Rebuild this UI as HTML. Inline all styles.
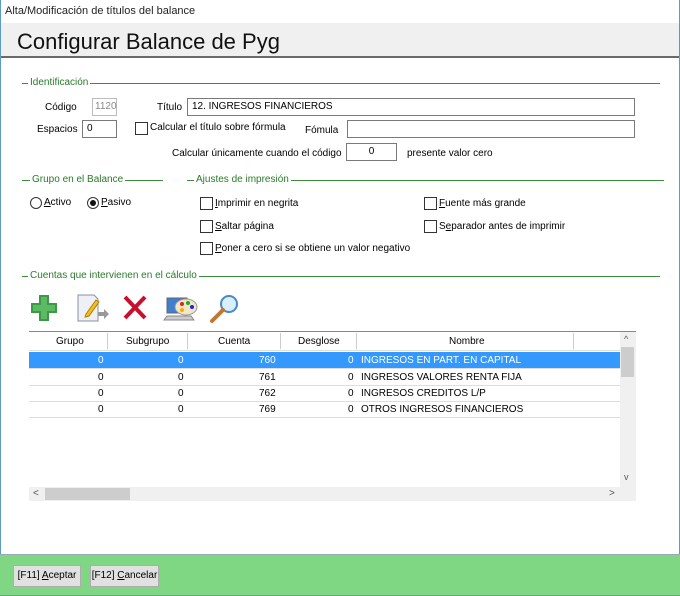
<!DOCTYPE html>
<html><head><meta charset="utf-8"><style>
*{margin:0;padding:0;box-sizing:border-box}
body{width:680px;height:596px;position:relative;background:#fff;font-family:"Liberation Sans",Arial,sans-serif;font-size:10px;color:#000;overflow:hidden}
.a{position:absolute;white-space:nowrap}
.in{position:absolute;border:1px solid #7a7a7a;background:#fff;padding:1px 4px;font-size:10px;line-height:14px}
.cb{position:absolute;width:13px;height:13px;border:1px solid #333;background:#fff}
.g{color:#2a7a2a}
.ln{position:absolute;height:1px;background:#3c8c3c}
.gl{position:absolute;height:1px;background:#ddd}
</style></head><body>
<div class="a" style="left:0;top:0;width:1px;height:596px;background:#5d9cc0"></div>
<div class="a" style="right:0;top:0;width:1px;height:596px;background:#5d9cc0"></div>
<div class="a" style="left:5px;top:5px;font-size:11px;color:#222">Alta/Modificación de títulos del balance</div>
<div class="a" style="left:1px;top:23px;width:678px;height:35px;background:#f0f0f0;border-bottom:2px solid #6a6a6a"></div>
<div class="a" style="left:17px;top:29px;font-size:22px;color:#111">Configurar Balance de Pyg</div>

<div class="ln" style="left:22px;top:83px;width:638px"></div>
<div class="a g" style="left:28px;top:77px;background:#fff;padding:0 2px">Identificación</div>
<div class="a" style="left:45px;top:102px">Código</div>
<div class="in" style="left:92px;top:98px;width:25px;height:18px;color:#888;border-color:#bbb;padding:1px 2px;text-align:center">1120</div>
<div class="a" style="left:157px;top:102px">Título</div>
<div class="in" style="left:187px;top:98px;width:448px;height:18px">12. INGRESOS FINANCIEROS</div>
<div class="a" style="left:37px;top:124px">Espacios</div>
<div class="in" style="left:82px;top:120px;width:35px;height:18px">0</div>
<div class="cb" style="left:135px;top:122px"></div>
<div class="a" style="left:150px;top:122px">Calcular el título sobre fórmula</div>
<div class="a" style="left:305px;top:125px">Fómula</div>
<div class="in" style="left:347px;top:120px;width:288px;height:18px"></div>
<div class="a" style="left:172px;top:148px">Calcular únicamente cuando el código</div>
<div class="in" style="left:346px;top:143px;width:51px;height:18px;text-align:center">0</div>
<div class="a" style="left:407px;top:148px">presente valor cero</div>

<div class="ln" style="left:22px;top:180px;width:141px"></div>
<div class="a g" style="left:30px;top:174px;background:#fff;padding:0 2px">Grupo en el Balance</div>
<div class="ln" style="left:187px;top:180px;width:477px"></div>
<div class="a g" style="left:194px;top:174px;background:#fff;padding:0 2px">Ajustes de impresión</div>
<div class="a" style="left:30px;top:197px;width:12px;height:12px;border:1px solid #333;border-radius:50%"></div>
<div class="a" style="left:44px;top:197px"><u>A</u>ctivo</div>
<div class="a" style="left:87px;top:197px;width:12px;height:12px;border:1px solid #333;border-radius:50%"><div style="margin:2px;width:6px;height:6px;border-radius:50%;background:#111"></div></div>
<div class="a" style="left:101px;top:197px"><u>P</u>asivo</div>
<div class="cb" style="left:200px;top:197px"></div><div class="a" style="left:215px;top:198px"><u>I</u>mprimir en negrita</div>
<div class="cb" style="left:200px;top:220px"></div><div class="a" style="left:215px;top:221px"><u>S</u>altar página</div>
<div class="cb" style="left:200px;top:242px"></div><div class="a" style="left:215px;top:243px"><u>P</u>oner a cero si se obtiene un valor negativo</div>
<div class="cb" style="left:424px;top:197px"></div><div class="a" style="left:439px;top:198px"><u>F</u>uente más grande</div>
<div class="cb" style="left:424px;top:220px"></div><div class="a" style="left:439px;top:221px">S<u>e</u>parador antes de imprimir</div>

<div class="ln" style="left:22px;top:276px;width:638px"></div>
<div class="a g" style="left:28px;top:270px;background:#fff;padding:0 2px">Cuentas que intervienen en el cálculo</div>

<svg class="a" style="left:30px;top:292px" width="215" height="32" viewBox="0 0 215 32">
<path d="M9 3h10v8h8v10h-8v8h-10v-8h-8v-10h8z" fill="#3a9a48"/>
<path d="M11 5h6v8h8v6h-8v8h-6v-8h-8v-6h8z" fill="#5cba62"/>
<path d="M48 3h16l4 4v22h-20z" fill="#eef0f5" stroke="#8a8fa8"/>
<path d="M56 22l10-14 3 2-10 14-4 1z" fill="#f0c020" stroke="#b08000"/>
<path d="M68 20h6v-3l5 5-5 5v-3h-6z" fill="#999"/>
<path d="M95 5l20 21M115 5l-20 21" stroke="#c8102e" stroke-width="4"/>
<rect x="137" y="6" width="20" height="15" fill="#3f7fd0" stroke="#666"/>
<path d="M137 24h24l3 4h-30z" fill="#ccc" stroke="#888"/>
<ellipse cx="156" cy="15" rx="11" ry="8" fill="#f1e6c8" stroke="#999"/>
<circle cx="152" cy="12" r="2" fill="#d22"/><circle cx="158" cy="11" r="2" fill="#2a2"/><circle cx="162" cy="15" r="2" fill="#22d"/><circle cx="152" cy="18" r="2" fill="#fa0"/>
<circle cx="199" cy="12" r="8" fill="#d8efff" stroke="#4c88c4" stroke-width="2"/>
<path d="M193 18l-11 11" stroke="#c07830" stroke-width="4" stroke-linecap="round"/>
</svg>

<div class="a" style="left:29px;top:331px;width:607px;height:170px;border-top:1px solid #888;background:#fff"></div>
<div class="a" style="left:29px;top:332px;width:591px;height:19px;border-bottom:1px solid #ddd">
 <span class="a" style="left:27px;top:4px">Grupo</span>
 <span class="a" style="left:97px;top:4px">Subgrupo</span>
 <span class="a" style="left:189px;top:4px">Cuenta</span>
 <span class="a" style="left:269px;top:4px">Desglose</span>
 <span class="a" style="left:420px;top:4px">Nombre</span>
 <span class="a" style="left:78px;top:1px;width:1px;height:16px;background:#ccc"></span>
 <span class="a" style="left:158px;top:1px;width:1px;height:16px;background:#ccc"></span>
 <span class="a" style="left:251px;top:1px;width:1px;height:16px;background:#ccc"></span>
 <span class="a" style="left:327px;top:1px;width:1px;height:16px;background:#ccc"></span>
 <span class="a" style="left:544px;top:1px;width:1px;height:16px;background:#ccc"></span>
</div>
<div class="a" style="left:29px;top:352px;width:591px;height:16px;background:#3399ff"></div>
<div class="gl" style="left:29px;top:385px;width:591px"></div>
<div class="gl" style="left:29px;top:401px;width:591px"></div>
<div class="gl" style="left:29px;top:417px;width:591px"></div>
<div class="gl" style="left:29px;top:368px;width:591px"></div>
<div style="color:#fff">
<div class="a" style="left:98px;top:355px">0</div><div class="a" style="left:178px;top:355px">0</div><div class="a" style="left:259px;top:355px">760</div><div class="a" style="left:348px;top:355px">0</div><div class="a" style="left:361px;top:355px">INGRESOS EN PART. EN CAPITAL</div></div>
<div class="a" style="left:98px;top:372px">0</div><div class="a" style="left:178px;top:372px">0</div><div class="a" style="left:259px;top:372px">761</div><div class="a" style="left:348px;top:372px">0</div><div class="a" style="left:361px;top:372px">INGRESOS VALORES RENTA FIJA</div>
<div class="a" style="left:98px;top:388px">0</div><div class="a" style="left:178px;top:388px">0</div><div class="a" style="left:259px;top:388px">762</div><div class="a" style="left:348px;top:388px">0</div><div class="a" style="left:361px;top:388px">INGRESOS CREDITOS L/P</div>
<div class="a" style="left:98px;top:404px">0</div><div class="a" style="left:178px;top:404px">0</div><div class="a" style="left:259px;top:404px">769</div><div class="a" style="left:348px;top:404px">0</div><div class="a" style="left:361px;top:404px">OTROS INGRESOS FINANCIEROS</div>
<div class="a" style="left:620px;top:332px;width:16px;height:155px;background:#f0f0f0"></div>
<div class="a" style="left:621px;top:347px;width:13px;height:30px;background:#cdcdcd"></div>
<div class="a" style="left:624px;top:334px;font-size:9px;color:#555">^</div>
<div class="a" style="left:624px;top:472px;font-size:9px;color:#555">v</div>
<div class="a" style="left:29px;top:487px;width:607px;height:14px;background:#f0f0f0"></div>
<div class="a" style="left:45px;top:488px;width:85px;height:12px;background:#cdcdcd"></div>
<div class="a" style="left:33px;top:488px;font-size:10px;color:#555">&lt;</div>
<div class="a" style="left:609px;top:488px;font-size:10px;color:#555">&gt;</div>

<div class="a" style="left:0;top:554px;width:680px;height:42px;background:#7fd683;border-top:1px solid #9ab;border-bottom:1px solid #5d9cc0"></div>
<div class="a" style="left:13px;top:565px;width:68px;height:22px;background:#e1e1e1;border:1px solid #adadad;text-align:center;line-height:20px">[F11] <u>A</u>ceptar</div>
<div class="a" style="left:90px;top:565px;width:69px;height:22px;background:#e1e1e1;border:1px solid #adadad;text-align:center;line-height:20px">[F12] <u>C</u>ancelar</div>
</body></html>
